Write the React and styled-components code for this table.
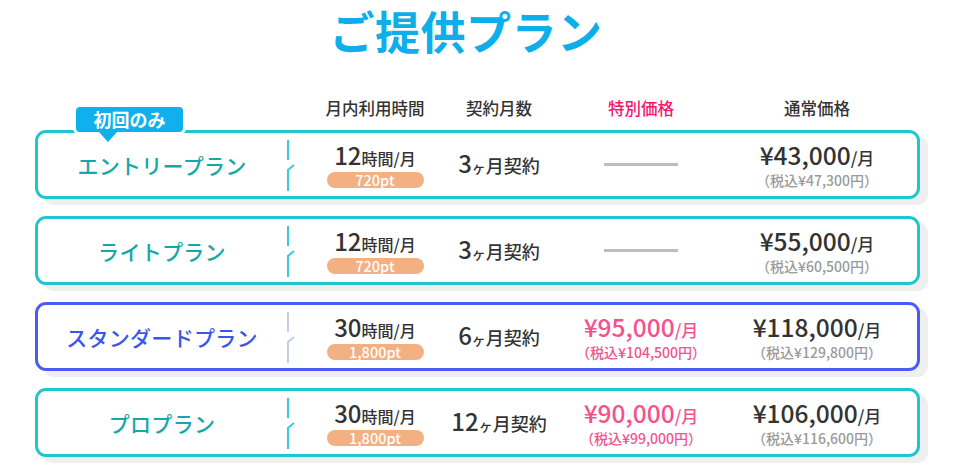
import styled, { createGlobalStyle } from 'styled-components';

const Global = createGlobalStyle`
  body {
    margin: 0;
    background: #fff;
    font-family: "Noto Sans CJK JP", "Noto Sans", sans-serif;
    color: #333;
  }
`;

const plans = [
  { name: 'エントリープラン', hours: '12', pt: '720pt', months: '3', special: null, normal: '43,000', normalTax: '47,300', first: true },
  { name: 'ライトプラン', hours: '12', pt: '720pt', months: '3', special: null, normal: '55,000', normalTax: '60,500' },
  { name: 'スタンダードプラン', hours: '30', pt: '1,800pt', months: '6', special: '95,000', specialTax: '104,500', normal: '118,000', normalTax: '129,800', blue: true },
  { name: 'プロプラン', hours: '30', pt: '1,800pt', months: '12', special: '90,000', specialTax: '99,000', normal: '106,000', normalTax: '116,600' },
];

function Divider({ blue }) {
  const c = blue ? '#c3cde6' : '#3ccbd3';
  return (
    <DivSvg width="10" height="52" viewBox="0 0 10 52">
      <path d="M2 0 V20" stroke={c} strokeWidth="2" fill="none" />
      <path d="M2 51 V30 L8 25" stroke={c} strokeWidth="2" fill="none" />
    </DivSvg>
  );
}

export default function App() {
  return (
    <Page>
      <Global />
      <Title>ご提供プラン</Title>
      <HeaderRow>
        <span />
        <span />
        <Head>月内利用時間</Head>
        <Head>契約月数</Head>
        <Head $pink>特別価格</Head>
        <Head>通常価格</Head>
      </HeaderRow>
      <List>
        {plans.map((p) => (
          <Card key={p.name} $blue={p.blue}>
            {p.first && <Badge>初回のみ</Badge>}
            <Name $blue={p.blue}>{p.name}</Name>
            <DivCell><Divider blue={p.blue} /></DivCell>
            <Cell>
              <Hours><Big>{p.hours}</Big>時間/月</Hours>
              <Pill>{p.pt}</Pill>
            </Cell>
            <Cell>
              <Months><Big>{p.months}</Big><Small>ヶ</Small>月契約</Months>
            </Cell>
            <Cell>
              {p.special ? (
                <>
                  <Price $pink><Big>¥{p.special}</Big>/月</Price>
                  <Tax $pink>（税込¥{p.specialTax}円）</Tax>
                </>
              ) : (
                <Dash />
              )}
            </Cell>
            <Cell>
              <Price><Big>¥{p.normal}</Big>/月</Price>
              <Tax>（税込¥{p.normalTax}円）</Tax>
            </Cell>
          </Card>
        ))}
      </List>
    </Page>
  );
}

const Page = styled.div`
  width: 960px;
  height: 476px;
  overflow: hidden;
`;

const Title = styled.h1`
  margin: 0;
  padding: 1px 28px 0 0;
  text-align: center;
  font-size: 45px;
  line-height: 60px;
  font-weight: 700;
  color: #0daeea;
  letter-spacing: 0.5px;
`;

const Columns = `
  display: grid;
  grid-template-columns: 248px 10px 158px 90px 194px 158px;
  align-items: center;
`;

const HeaderRow = styled.div`
  ${Columns}
  margin: 32px 40px 0 35px;
  padding: 0 3px;
  height: 30px;
`;

const Head = styled.span`
  text-align: center;
  font-size: 16.5px;
  font-weight: 500;
  white-space: nowrap;
  color: ${(p) => (p.$pink ? '#f4166f' : '#333')};
`;

const List = styled.div`
  display: flex;
  flex-direction: column;
  gap: 17px;
  margin: 7px 40px 0 35px;
`;

const Card = styled.div`
  ${Columns}
  position: relative;
  height: 63px;
  border: 3px solid ${(p) => (p.$blue ? '#4a5cf6' : '#1ec6cf')};
  border-radius: 11px;
  background: #fff;
  box-shadow: 8px 6px 0 #efefef;
`;

const Badge = styled.div`
  position: absolute;
  left: 38px;
  top: -26px;
  width: 107px;
  height: 25px;
  border-radius: 4px;
  background: #0fb0ec;
  color: #fff;
  font-size: 18px;
  font-weight: 700;
  line-height: 25px;
  text-align: center;
  box-shadow: 0 0 0 3px #fff;
  &::after {
    content: '';
    position: absolute;
    left: 22px;
    top: 24px;
    border-left: 10px solid transparent;
    border-right: 10px solid transparent;
    border-top: 11px solid #0fb0ec;
  }
`;

const Name = styled.div`
  text-align: center;
  font-size: 21px;
  font-weight: 500;
  white-space: nowrap;
  color: ${(p) => (p.$blue ? '#3b55ea' : '#16a8a8')};
  letter-spacing: 0.3px;
`;

const DivCell = styled.div`
  display: flex;
  align-items: center;
  margin-top: 2px;
`;

const DivSvg = styled.svg`
  flex: none;
`;

const Cell = styled.div`
  display: flex;
  flex-direction: column;
  align-items: center;
  justify-content: center;
  white-space: nowrap;
`;

const Big = styled.span`
  font-size: 24px;
  font-weight: 500;
`;

const Small = styled.span`
  font-size: 14px;
`;

const Hours = styled.div`
  font-size: 16px;
  font-weight: 500;
  color: #333;
  line-height: 27px;
`;

const Pill = styled.div`
  width: 97px;
  height: 16px;
  border-radius: 8px;
  background: #f3b083;
  color: #fff;
  font-size: 14.5px;
  font-weight: 500;
  line-height: 16px;
  text-align: center;
`;

const Months = styled.div`
  font-size: 18px;
  font-weight: 500;
  line-height: 30px;
  color: #333;
`;

const Price = styled.div`
  font-size: 17px;
  font-weight: 500;
  line-height: 28px;
  color: ${(p) => (p.$pink ? '#f4528f' : '#333')};
  & > span {
    font-size: 24.5px;
  }
`;

const Tax = styled.div`
  font-size: 14px;
  line-height: 16px;
  font-weight: 500;
  color: ${(p) => (p.$pink ? '#f4528f' : '#9a9a9a')};
`;

const Dash = styled.div`
  width: 74px;
  height: 3px;
  background: #bdbdbd;
`;
